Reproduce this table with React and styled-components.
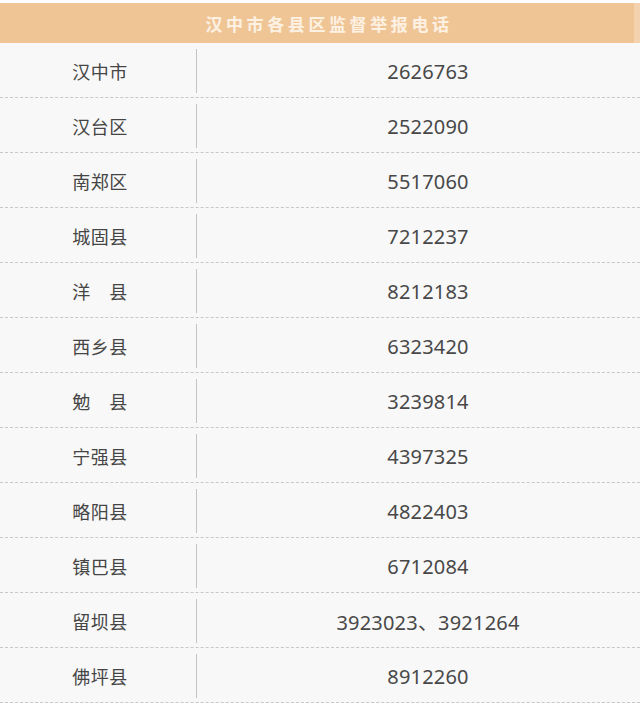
import React from "react";
import styled, { createGlobalStyle } from "styled-components";

const Global = createGlobalStyle`
  html, body {
    margin: 0;
    padding: 0;
    background: #ffffff;
  }
  body {
    font-family: "Noto Sans", "Noto Sans CJK SC", sans-serif;
  }
`;

const S = {
  Table: styled.div`
    padding-top: 3px;
    width: 640px;
    background: #ffffff;
  `,
  Header: styled.div`
    height: 40px;
    display: flex;
    align-items: center;
    justify-content: center;
    padding-left: 24px;
    background: #f0c596;
    border-right: 6px solid #f4d2ad;
    color: #fcf1e3;
    font-family: "Noto Sans CJK SC", sans-serif;
    font-weight: 700;
    font-size: 17px;
    letter-spacing: 3.6px;
  `,
  Row: styled.div`
    display: flex;
    height: 54px;
    background: #f8f8f8;
    border-bottom: 1px dashed #c8c8c8;
  `,
  Name: styled.div`
    box-sizing: border-box;
    width: 196px;
    display: flex;
    align-items: center;
    justify-content: center;
    padding-top: 2px;
    padding-left: 4px;
    font-family: "Noto Sans CJK SC", sans-serif;
    font-size: 18px;
    letter-spacing: 0.5px;
    color: #454545;
  `,
  Divider: styled.div`
    width: 1px;
    margin: 6px 0 4px;
    background: #c4c4c4;
  `,
  Phone: styled.div`
    flex: 1;
    display: flex;
    align-items: center;
    justify-content: center;
    padding-left: 19px;
    padding-top: 2px;
    font-family: "Noto Sans", "Noto Sans CJK SC", sans-serif;
    font-size: 20px;
    color: #484848;
    letter-spacing: 0.2px;
  `
};

const rows = [
  ["汉中市", "2626763"],
  ["汉台区", "2522090"],
  ["南郑区", "5517060"],
  ["城固县", "7212237"],
  ["洋\u3000县", "8212183"],
  ["西乡县", "6323420"],
  ["勉\u3000县", "3239814"],
  ["宁强县", "4397325"],
  ["略阳县", "4822403"],
  ["镇巴县", "6712084"],
  ["留坝县", "3923023、3921264"],
  ["佛坪县", "8912260"]
];

const App = () => (
  <>
    <Global />
    <S.Table>
      <S.Header>汉中市各县区监督举报电话</S.Header>
      {rows.map(([name, phone]) => (
        <S.Row key={name}>
          <S.Name>{name}</S.Name>
          <S.Divider />
          <S.Phone>{phone}</S.Phone>
        </S.Row>
      ))}
    </S.Table>
  </>
);

export default App;
